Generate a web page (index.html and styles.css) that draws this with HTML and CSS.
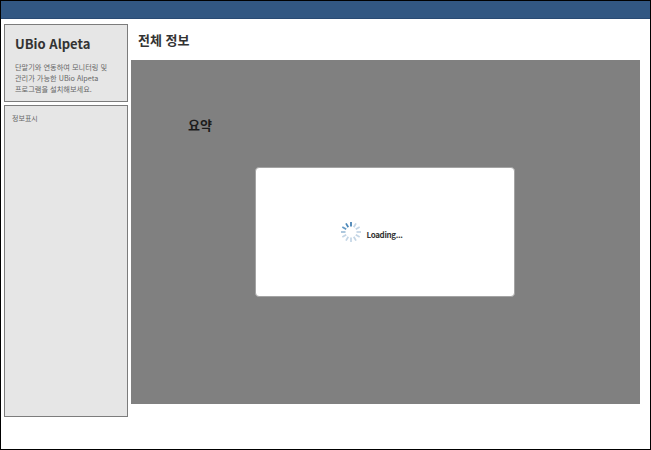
FILE: index.html
```html
<!DOCTYPE html>
<html lang="ko">
<head>
<meta charset="utf-8">
<title>UBio Alpeta</title>
<link rel="stylesheet" href="styles.css">
</head>
<body>
<div class="app">
  <header class="topbar"></header>
  <div class="layout">
    <aside class="sidebar">
      <section class="panel intro">
        <h1>UBio Alpeta</h1>
        <p>단말기와 연동하여 모니터링 및<br>관리가 가능한 UBio Alpeta<br>프로그램을 설치해보세요.</p>
      </section>
      <section class="panel info">정보표시</section>
    </aside>
    <main class="main">
      <h2 class="title">전체 정보</h2>
      <div class="content">
        <h3 class="summary">요약</h3>
        <div class="dialog" role="status">
          <svg class="spinner" viewBox="-11 -11 22 22" fill="none" stroke-width="1.7">
            <g stroke="#c3d5e5">
              <path d="M0-5.5V-10" transform="rotate(30)"/>
              <path d="M0-5.5V-10" transform="rotate(60)"/>
              <path d="M0-5.5V-10" transform="rotate(90)"/>
              <path d="M0-5.5V-10" transform="rotate(120)"/>
              <path d="M0-5.5V-10" transform="rotate(150)"/>
              <path d="M0-5.5V-10" transform="rotate(180)"/>
              <path d="M0-5.5V-10" transform="rotate(210)"/>
              <path d="M0-5.5V-10" transform="rotate(240)"/>
            </g>
            <path stroke="#9dbdd7" d="M0-5.5V-10" transform="rotate(270)"/>
            <path stroke="#6499c4" d="M0-5.5V-10" transform="rotate(300)"/>
            <path stroke="#4a87b9" d="M0-5.5V-10" transform="rotate(330)"/>
            <path stroke="#3d7baf" d="M0-5.5V-10"/>
          </svg>
          <span class="loading">Loading...</span>
        </div>
      </div>
    </main>
  </div>
</div>
</body>
</html>
```

FILE: styles.css
```css
* { box-sizing: border-box; }
body { margin: 0; font-family: "Noto Sans CJK KR", "Noto Sans", sans-serif; color: #333; }
h1, h2, h3, p { margin: 0; }
.app { height: 450px; border: 1px solid #000; background: #fff; overflow: hidden; }
.topbar { height: 18px; background: #325782; border-bottom: 1px solid #294a73; }
.layout { display: flex; gap: 3px; padding: 0 10px 0 3px; }
.sidebar { width: 124px; padding-top: 5px; display: flex; flex-direction: column; gap: 3px; }
.panel { background: #e6e6e6; border: 1px solid #7c7c7c; color: #666; }
.intro { height: 78px; padding: 8px 0 0 10px; }
.intro h1 { font-size: 13px; line-height: 22px; font-weight: 700; color: #333; white-space: nowrap; }
.intro p { margin-top: 6.5px; font-size: 7.2px; line-height: 11.3px; white-space: nowrap; }
.info { height: 312px; padding: 7px 0 0 7px; font-size: 7px; line-height: 11px; }
.main { flex: 1; }
.title { height: 41px; padding-left: 7px; font-size: 13px; line-height: 41px; font-weight: 700; color: #333; }
.content { height: 344px; background: #808080; padding-top: 54px; }
.summary { padding-left: 57px; height: 53px; font-size: 13px; line-height: 22px; font-weight: 700; color: #1c1c1c; }
.dialog { width: 260px; height: 130px; margin-left: 124px; border: 1px solid #a4a4a4; border-radius: 4px; background: #fff; display: flex; align-items: flex-start; padding: 52.5px 0 0 83.5px; gap: 5px; }
.spinner { width: 22px; height: 22px; }
.loading { margin-top: 8px; font-size: 8px; line-height: 12px; font-weight: 700; letter-spacing: -0.35px; }
```
